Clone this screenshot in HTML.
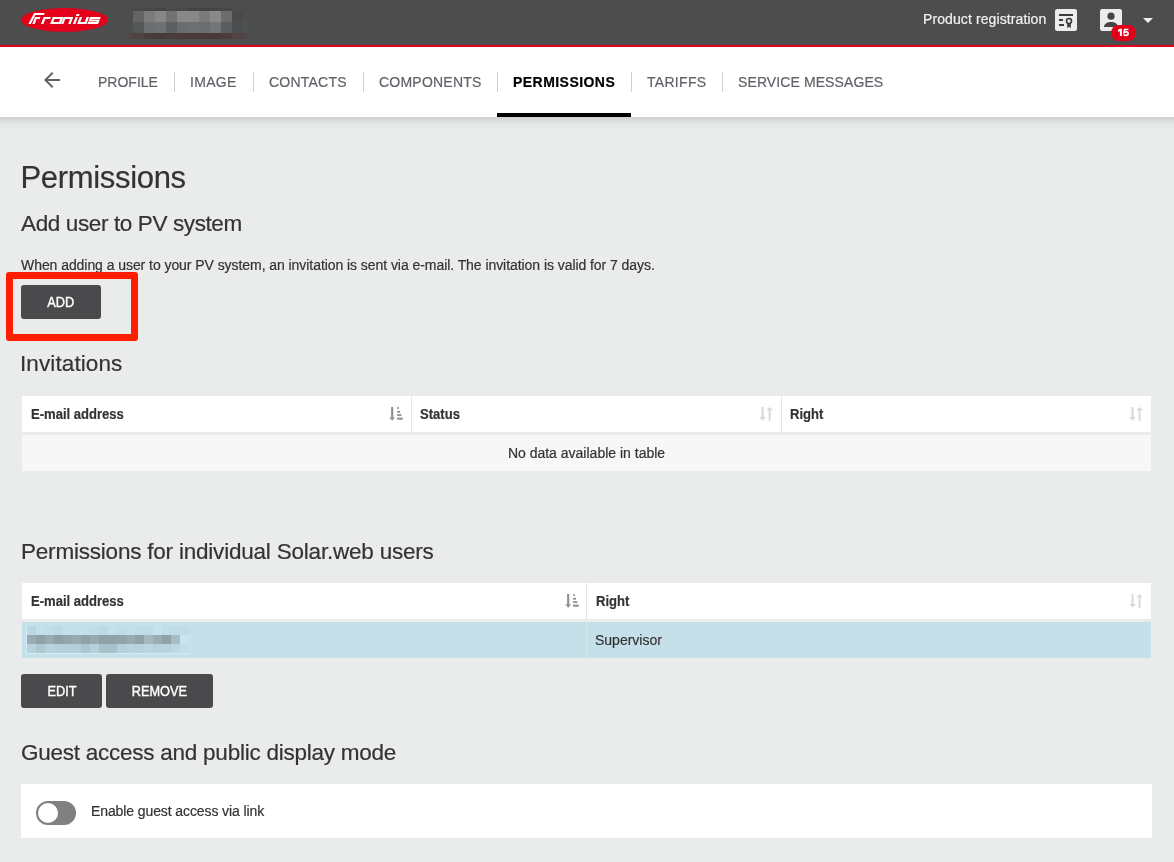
<!DOCTYPE html>
<html><head><meta charset="utf-8">
<style>
*{box-sizing:border-box;margin:0;padding:0}
html,body{width:1174px;height:862px;overflow:hidden}
body{will-change:transform;background:#eaebeb;font-family:"Liberation Sans",sans-serif;color:#333;position:relative}
.abs{position:absolute}
h1,h3,.tab,.th,.td,.txt{-webkit-text-stroke:0.2px currentColor}
#hdr{left:0;top:0;width:1174px;height:47px;background:#4d4d4d;border-bottom:2px solid #e2001a}
#nav{left:0;top:47px;width:1174px;height:70px;background:#fff}
#shadow{left:0;top:117px;width:1174px;height:11px;background:linear-gradient(#cfd0d0 0%,#dadbdb 30%,#e4e5e5 60%,#eaebeb 100%)}
.tab{position:absolute;top:0;height:70px;font-size:14px;color:#5f6368;line-height:70px;white-space:nowrap}
.act{color:#000;font-weight:700}
.div{position:absolute;top:25px;width:1px;height:20px;background:#cfcfcf}
h1{position:absolute;left:20.5px;font-weight:400;font-size:31px;letter-spacing:-0.32px;white-space:nowrap;color:#333}
h3{position:absolute;left:21px;font-weight:400;font-size:22.5px;white-space:nowrap;color:#333}
.btn{position:absolute;height:34px;background:#4a4a4c;border-radius:3px;color:#fff;font-size:14px;text-align:center;line-height:34px}
.btn span{display:inline-block;transform:scaleX(0.91);-webkit-text-stroke:0.4px #fff}
.tbl{position:absolute;left:22px;width:1129px}
.th{position:absolute;height:36px;font-weight:700;font-size:14.5px;line-height:36px;padding-left:10px;transform:scaleX(0.9);transform-origin:0 50%;color:#333;white-space:nowrap}
.td{position:absolute;height:36px;font-size:14px;line-height:36px;color:#333;white-space:nowrap}
</style></head><body>
<div id="hdr" class="abs">
  <svg class="abs" style="left:0;top:0" width="120" height="44" viewBox="0 0 120 44"><ellipse cx="64.5" cy="19.9" rx="43.5" ry="11.9" fill="#e2001a"/><path transform="matrix(1 0 -0.37 1 8.917 0)" fill="#fff" d="M30.0 13.00H32.4L30.8 24.10H28.40ZM30.0 13.00H40.60V15.00H29.7ZM32.30 16.90H34.70V24.10H32.30ZM32.30 16.90H37.80V18.90H32.30ZM41.00 16.90H43.40V24.10H41.00ZM41.00 16.90H48.20V18.90H41.00ZM61.00 16.90H63.40V24.10H61.00ZM68.20 16.90H70.60V24.10H68.20ZM61.00 16.90H70.60V18.90H61.00ZM72.90 16.90H75.30V24.10H72.90ZM72.90 14.00H75.90V15.90H72.90ZM77.10 16.90H79.50V24.10H77.10ZM84.00 16.90H86.40V24.10H84.00ZM77.10 22.10H86.40V24.10H77.10ZM87.40 16.90H98.10V18.90H87.40ZM87.40 16.90H89.80V21.50H87.40ZM87.40 19.50H98.10V21.50H87.40ZM95.70 19.50H98.10V24.10H95.70ZM87.30 22.10H98.10V24.10H87.30Z"/><path transform="matrix(1 0 -0.37 1 8.917 0)" fill="#fff" fill-rule="evenodd" d="M50.1 16.9H60.7V24.1H50.1Z M52.5 18.9H58.3V22.1H52.5Z"/></svg>
  <div class="abs" style="left:130px;top:8px;width:3px;height:3px;background:#4d4d4d"></div><div class="abs" style="left:133px;top:8px;width:11px;height:3px;background:#4a4a4a"></div><div class="abs" style="left:144px;top:8px;width:11px;height:3px;background:#474747"></div><div class="abs" style="left:155px;top:8px;width:11px;height:3px;background:#444444"></div><div class="abs" style="left:166px;top:8px;width:11px;height:3px;background:#4a4a4a"></div><div class="abs" style="left:177px;top:8px;width:11px;height:3px;background:#484848"></div><div class="abs" style="left:188px;top:8px;width:11px;height:3px;background:#444444"></div><div class="abs" style="left:199px;top:8px;width:11px;height:3px;background:#444444"></div><div class="abs" style="left:210px;top:8px;width:11px;height:3px;background:#444444"></div><div class="abs" style="left:221px;top:8px;width:11px;height:3px;background:#484848"></div><div class="abs" style="left:232px;top:8px;width:11px;height:3px;background:#4e4e4e"></div><div class="abs" style="left:243px;top:8px;width:4px;height:3px;background:#4d4d4d"></div><div class="abs" style="left:130px;top:11px;width:3px;height:11px;background:#4e4c4c"></div><div class="abs" style="left:133px;top:11px;width:11px;height:11px;background:#646464"></div><div class="abs" style="left:144px;top:11px;width:11px;height:11px;background:#7b7b7b"></div><div class="abs" style="left:155px;top:11px;width:11px;height:11px;background:#868686"></div><div class="abs" style="left:166px;top:11px;width:11px;height:11px;background:#727272"></div><div class="abs" style="left:177px;top:11px;width:11px;height:11px;background:#888888"></div><div class="abs" style="left:188px;top:11px;width:11px;height:11px;background:#888888"></div><div class="abs" style="left:199px;top:11px;width:11px;height:11px;background:#7b7b7b"></div><div class="abs" style="left:210px;top:11px;width:11px;height:11px;background:#898989"></div><div class="abs" style="left:221px;top:11px;width:11px;height:11px;background:#6c6c6c"></div><div class="abs" style="left:232px;top:11px;width:11px;height:11px;background:#4a4a4a"></div><div class="abs" style="left:243px;top:11px;width:4px;height:11px;background:#4d4d4d"></div><div class="abs" style="left:130px;top:22px;width:3px;height:11px;background:#4b4f4f"></div><div class="abs" style="left:133px;top:22px;width:11px;height:11px;background:#535757"></div><div class="abs" style="left:144px;top:22px;width:11px;height:11px;background:#6b6f6f"></div><div class="abs" style="left:155px;top:22px;width:11px;height:11px;background:#6d7171"></div><div class="abs" style="left:166px;top:22px;width:11px;height:11px;background:#5c6060"></div><div class="abs" style="left:177px;top:22px;width:11px;height:11px;background:#686c6c"></div><div class="abs" style="left:188px;top:22px;width:11px;height:11px;background:#6c7070"></div><div class="abs" style="left:199px;top:22px;width:11px;height:11px;background:#6a6e6e"></div><div class="abs" style="left:210px;top:22px;width:11px;height:11px;background:#727676"></div><div class="abs" style="left:221px;top:22px;width:11px;height:11px;background:#5a5e5e"></div><div class="abs" style="left:232px;top:22px;width:11px;height:11px;background:#4a4e4e"></div><div class="abs" style="left:243px;top:22px;width:4px;height:11px;background:#4d5151"></div><div class="abs" style="left:130px;top:33px;width:3px;height:6px;background:#544545"></div><div class="abs" style="left:133px;top:33px;width:11px;height:6px;background:#4f4242"></div><div class="abs" style="left:144px;top:33px;width:11px;height:6px;background:#4a3c3c"></div><div class="abs" style="left:155px;top:33px;width:11px;height:6px;background:#473a3a"></div><div class="abs" style="left:166px;top:33px;width:11px;height:6px;background:#4a3c3c"></div><div class="abs" style="left:177px;top:33px;width:11px;height:6px;background:#4b3c3c"></div><div class="abs" style="left:188px;top:33px;width:11px;height:6px;background:#483a3a"></div><div class="abs" style="left:199px;top:33px;width:11px;height:6px;background:#4a3b3b"></div><div class="abs" style="left:210px;top:33px;width:11px;height:6px;background:#483a3a"></div><div class="abs" style="left:221px;top:33px;width:11px;height:6px;background:#4c3d3d"></div><div class="abs" style="left:232px;top:33px;width:11px;height:6px;background:#524444"></div><div class="abs" style="left:243px;top:33px;width:4px;height:6px;background:#524545"></div>
  <div class="abs txt" style="left:923px;top:10px;font-size:14px;letter-spacing:0.1px;color:#f2f2f2;white-space:nowrap;line-height:18px">Product registration</div>
  <svg class="abs" style="left:1055px;top:9px" width="22" height="22" viewBox="0 0 22 22">
    <rect x="0" y="0" width="22" height="22" rx="2.2" fill="#ececec"/>
    <rect x="4" y="5" width="14" height="2" fill="#3d3d3d"/>
    <rect x="4" y="10" width="4" height="2" fill="#3d3d3d"/>
    <rect x="4" y="15" width="5" height="2" fill="#3d3d3d"/>
    <circle cx="14" cy="12" r="2.5" fill="none" stroke="#3d3d3d" stroke-width="1.6"/>
    <path d="M12.2 14.3 L12.2 19.2 L14 17.8 L15.8 19.2 L15.8 14.3 Z" fill="#3d3d3d"/>
  </svg>
  <svg class="abs" style="left:1100px;top:9px" width="22" height="22" viewBox="0 0 22 22">
    <rect x="0" y="0" width="22" height="22" rx="2.2" fill="#ececec"/>
    <circle cx="11" cy="7.2" r="3.6" fill="#444"/>
    <path d="M4 18 C4 14.2 8 12.9 11 12.9 C14 12.9 18 14.2 18 18 Z" fill="#444"/>
  </svg>
  <svg class="abs" style="left:1111px;top:25px" width="25" height="16" viewBox="0 0 25 16"><rect width="25" height="16" rx="8" fill="#e2001a"/><path d="M8.9 3.7H10.9V11H8.9V6.0L7.0 6.9V5.1L8.9 3.7Z" fill="#fff"/><path d="M17.4 4.5 H13.5 L13.1 7.5 C13.6 7.0 14.3 6.8 15.0 6.8 C16.4 6.8 17.1 7.7 17.1 8.8 C17.1 10.0 16.3 10.4 15.0 10.4 C14.1 10.4 13.4 10.1 13.0 9.6" fill="none" stroke="#fff" stroke-width="1.7"/></svg>
  <svg class="abs" style="left:1143px;top:18px" width="10" height="5" viewBox="0 0 10 5"><path d="M0 0H10L5 5Z" fill="#eee"/></svg>
</div>
<div id="nav" class="abs">
  <svg class="abs" style="left:44px;top:25px" width="16" height="16" viewBox="0 0 16 16"><path d="M16 7H3.83l5.59-5.59L8 0 0 8l8 8 1.41-1.41L3.83 9H16z" fill="#5f6368"/></svg>
  <div class="tab" style="left:98px">PROFILE</div>
  <div class="div" style="left:174px"></div>
  <div class="tab" style="left:190px;letter-spacing:0.3px">IMAGE</div>
  <div class="div" style="left:253px"></div>
  <div class="tab" style="left:269px;letter-spacing:0.22px">CONTACTS</div>
  <div class="div" style="left:363px"></div>
  <div class="tab" style="left:379px;letter-spacing:0.22px">COMPONENTS</div>
  <div class="div" style="left:497px"></div>
  <div class="tab act" style="left:513px;letter-spacing:0.45px">PERMISSIONS</div>
  <div class="abs" style="left:497px;top:66px;width:134px;height:4px;background:#000"></div>
  <div class="div" style="left:631px"></div>
  <div class="tab" style="left:647px;letter-spacing:0.3px">TARIFFS</div>
  <div class="div" style="left:722px"></div>
  <div class="tab" style="left:738px;letter-spacing:0.1px">SERVICE MESSAGES</div>
</div>
<div id="shadow" class="abs"></div>

<h1 style="top:160px">Permissions</h1>
<h3 style="top:211px;letter-spacing:-0.38px">Add user to PV system</h3>
<div class="abs txt" style="left:21px;top:257px;font-size:14px;letter-spacing:-0.06px;white-space:nowrap">When adding a user to your PV system, an invitation is sent via e-mail. The invitation is valid for 7 days.</div>
<div class="btn" style="left:21px;top:285px;width:80px"><span>ADD</span></div>
<div class="abs" style="left:6px;top:272px;width:132px;height:69px;border:7px solid #ff1e00;border-radius:3px"></div>

<h3 style="top:351px;left:20px;letter-spacing:0.1px">Invitations</h3>
<div class="abs" style="left:22px;top:396px;width:1129px;height:36px;background:#fff"></div>
<div class="abs" style="left:411px;top:396px;width:1px;height:36px;background:#e6e6e6"></div>
<div class="abs" style="left:781px;top:396px;width:1px;height:36px;background:#e6e6e6"></div>
<div class="th" style="left:22px;top:396px">E-mail address</div>
<div class="th" style="left:411px;top:396px">Status</div>
<div class="th" style="left:781px;top:396px">Right</div>
<svg class="abs" style="left:389px;top:406px" width="16" height="16" viewBox="0 0 16 16" fill="#8e8e8e"><rect x="2.1" y="1" width="2.1" height="10.6"/><path d="M0.35 11.2H5.95L3.15 14.8Z"/><rect x="8.1" y="1.2" width="1.9" height="1.6"/><rect x="8.1" y="4.8" width="3" height="1.9"/><rect x="8.1" y="8.2" width="4.4" height="1.7"/><rect x="8.1" y="11.6" width="5.6" height="2.1"/></svg><svg class="abs" style="left:758px;top:406px" width="16" height="16" viewBox="0 0 16 16" fill="#d9d9d9"><rect x="3.5" y="1" width="2.1" height="10.5"/><path d="M1.3 11H7.8L4.55 14.8Z"/><rect x="10.6" y="4.3" width="2.0" height="10.5"/><path d="M8.3 4.5H14.9L11.6 1Z"/></svg><svg class="abs" style="left:1128px;top:406px" width="16" height="16" viewBox="0 0 16 16" fill="#d9d9d9"><rect x="3.5" y="1" width="2.1" height="10.5"/><path d="M1.3 11H7.8L4.55 14.8Z"/><rect x="10.6" y="4.3" width="2.0" height="10.5"/><path d="M8.3 4.5H14.9L11.6 1Z"/></svg>
<div class="td" style="left:22px;top:435px;width:1129px;background:#f7f7f7;text-align:center">No data available in table</div>

<h3 style="top:539px;letter-spacing:-0.21px">Permissions for individual Solar.web users</h3>
<div class="abs" style="left:22px;top:583px;width:1129px;height:36px;background:#fff"></div>
<div class="abs" style="left:586px;top:583px;width:1px;height:36px;background:#e6e6e6"></div>
<div class="th" style="left:22px;top:583px">E-mail address</div>
<div class="th" style="left:586.5px;top:583px">Right</div>
<svg class="abs" style="left:565px;top:593px" width="16" height="16" viewBox="0 0 16 16" fill="#8e8e8e"><rect x="2.1" y="1" width="2.1" height="10.6"/><path d="M0.35 11.2H5.95L3.15 14.8Z"/><rect x="8.1" y="1.2" width="1.9" height="1.6"/><rect x="8.1" y="4.8" width="3" height="1.9"/><rect x="8.1" y="8.2" width="4.4" height="1.7"/><rect x="8.1" y="11.6" width="5.6" height="2.1"/></svg><svg class="abs" style="left:1128px;top:593px" width="16" height="16" viewBox="0 0 16 16" fill="#d9d9d9"><rect x="3.5" y="1" width="2.1" height="10.5"/><path d="M1.3 11H7.8L4.55 14.8Z"/><rect x="10.6" y="4.3" width="2.0" height="10.5"/><path d="M8.3 4.5H14.9L11.6 1Z"/></svg>
<div class="td" style="left:22px;top:622px;width:1129px;background:#c6e0ea"></div>
<div class="abs" style="left:586px;top:622px;width:1px;height:36px;background:#d5e8ef"></div>
<div class="abs" style="left:27px;top:626px;width:9px;height:9px;background:#b8d8e2"></div><div class="abs" style="left:36px;top:626px;width:9px;height:9px;background:#c2e0ea"></div><div class="abs" style="left:45px;top:626px;width:9px;height:9px;background:#c0dde8"></div><div class="abs" style="left:54px;top:626px;width:9px;height:9px;background:#bddbe5"></div><div class="abs" style="left:63px;top:626px;width:9px;height:9px;background:#c2e0ea"></div><div class="abs" style="left:72px;top:626px;width:9px;height:9px;background:#c2e0ea"></div><div class="abs" style="left:81px;top:626px;width:9px;height:9px;background:#c2e0ea"></div><div class="abs" style="left:90px;top:626px;width:9px;height:9px;background:#c0dee8"></div><div class="abs" style="left:99px;top:626px;width:9px;height:9px;background:#bcdae4"></div><div class="abs" style="left:108px;top:626px;width:9px;height:9px;background:#c2e0ea"></div><div class="abs" style="left:117px;top:626px;width:9px;height:9px;background:#c0dee8"></div><div class="abs" style="left:126px;top:626px;width:9px;height:9px;background:#c2e0ea"></div><div class="abs" style="left:135px;top:626px;width:9px;height:9px;background:#c0dde7"></div><div class="abs" style="left:144px;top:626px;width:9px;height:9px;background:#c0dde7"></div><div class="abs" style="left:153px;top:626px;width:9px;height:9px;background:#c4e2ec"></div><div class="abs" style="left:162px;top:626px;width:9px;height:9px;background:#c0dee8"></div><div class="abs" style="left:171px;top:626px;width:9px;height:9px;background:#c0dde7"></div><div class="abs" style="left:180px;top:626px;width:9px;height:9px;background:#c0dde7"></div><div class="abs" style="left:27px;top:635px;width:9px;height:9px;background:#98acb4"></div><div class="abs" style="left:36px;top:635px;width:9px;height:9px;background:#8fa2a9"></div><div class="abs" style="left:45px;top:635px;width:9px;height:9px;background:#98abb2"></div><div class="abs" style="left:54px;top:635px;width:9px;height:9px;background:#8fa1a8"></div><div class="abs" style="left:63px;top:635px;width:9px;height:9px;background:#93a6ad"></div><div class="abs" style="left:72px;top:635px;width:9px;height:9px;background:#98abb3"></div><div class="abs" style="left:81px;top:635px;width:9px;height:9px;background:#8fa2a8"></div><div class="abs" style="left:90px;top:635px;width:9px;height:9px;background:#96a9b0"></div><div class="abs" style="left:99px;top:635px;width:9px;height:9px;background:#8fa1a8"></div><div class="abs" style="left:108px;top:635px;width:9px;height:9px;background:#90a2a8"></div><div class="abs" style="left:117px;top:635px;width:9px;height:9px;background:#92a4ab"></div><div class="abs" style="left:126px;top:635px;width:9px;height:9px;background:#98abb2"></div><div class="abs" style="left:135px;top:635px;width:9px;height:9px;background:#90a2a8"></div><div class="abs" style="left:144px;top:635px;width:9px;height:9px;background:#a6b9bf"></div><div class="abs" style="left:153px;top:635px;width:9px;height:9px;background:#9aadb4"></div><div class="abs" style="left:162px;top:635px;width:9px;height:9px;background:#90a2a8"></div><div class="abs" style="left:171px;top:635px;width:9px;height:9px;background:#a8bcc3"></div><div class="abs" style="left:180px;top:635px;width:9px;height:9px;background:#c8e4ee"></div><div class="abs" style="left:27px;top:644px;width:9px;height:9px;background:#b5d3dd"></div><div class="abs" style="left:36px;top:644px;width:9px;height:9px;background:#adc8d1"></div><div class="abs" style="left:45px;top:644px;width:9px;height:9px;background:#b8d3dd"></div><div class="abs" style="left:54px;top:644px;width:9px;height:9px;background:#b5d0da"></div><div class="abs" style="left:63px;top:644px;width:9px;height:9px;background:#b4cfd9"></div><div class="abs" style="left:72px;top:644px;width:9px;height:9px;background:#b4cfd9"></div><div class="abs" style="left:81px;top:644px;width:9px;height:9px;background:#acc7d0"></div><div class="abs" style="left:90px;top:644px;width:9px;height:9px;background:#b6d1db"></div><div class="abs" style="left:99px;top:644px;width:9px;height:9px;background:#a8c2cc"></div><div class="abs" style="left:108px;top:644px;width:9px;height:9px;background:#a8c2cc"></div><div class="abs" style="left:117px;top:644px;width:9px;height:9px;background:#b4d0da"></div><div class="abs" style="left:126px;top:644px;width:9px;height:9px;background:#b8d3dd"></div><div class="abs" style="left:135px;top:644px;width:9px;height:9px;background:#b6d2dc"></div><div class="abs" style="left:144px;top:644px;width:9px;height:9px;background:#bad7e1"></div><div class="abs" style="left:153px;top:644px;width:9px;height:9px;background:#b7d3dd"></div><div class="abs" style="left:162px;top:644px;width:9px;height:9px;background:#b8d3de"></div><div class="abs" style="left:171px;top:644px;width:9px;height:9px;background:#bcd9e3"></div><div class="abs" style="left:180px;top:644px;width:9px;height:9px;background:#c2dfe9"></div><div class="abs" style="left:26px;top:626px;width:1px;height:28px;background:#d6eaf1"></div><div class="abs" style="left:26px;top:653px;width:164px;height:1px;background:#d6eaf1"></div>
<div class="td" style="left:595px;top:622px">Supervisor</div>
<div class="btn" style="left:21px;top:674px;width:81px"><span>EDIT</span></div>
<div class="btn" style="left:106px;top:674px;width:107px"><span>REMOVE</span></div>

<h3 style="top:739.5px;letter-spacing:-0.25px">Guest access and public display mode</h3>
<div class="abs" style="left:21px;top:784px;width:1131px;height:54px;background:#fff"></div>
<div class="abs" style="left:36px;top:801px;width:40px;height:24px;border-radius:12px;background:#808080"></div>
<div class="abs" style="left:38px;top:803px;width:20px;height:20px;border-radius:10px;background:#fff"></div>
<div class="abs txt" style="left:91px;top:801px;font-size:14px;line-height:20px;letter-spacing:-0.1px;white-space:nowrap">Enable guest access via link</div>
</body></html>
